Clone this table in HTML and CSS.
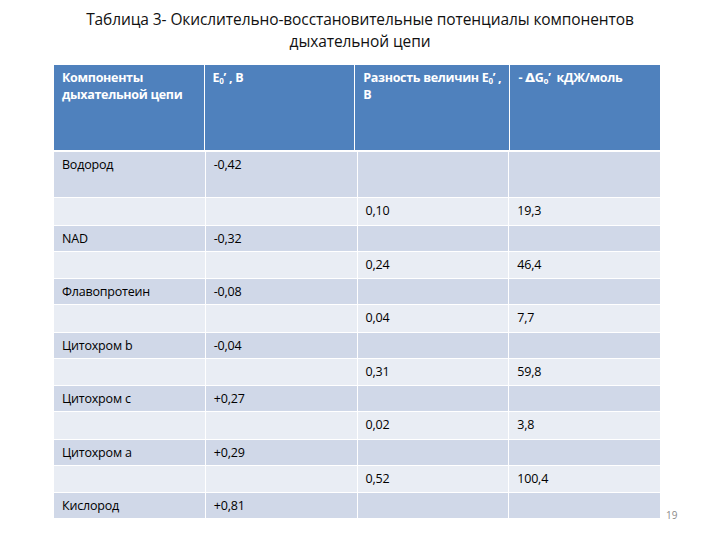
FILE: index.html
```html
<!DOCTYPE html>
<html lang="ru">
<head>
<meta charset="utf-8">
<title>Таблица 3</title>
<link rel="stylesheet" href="styles.css">
</head>
<body>
<div class="slide">
  <h1 class="title">Таблица 3- Окислительно-восстановительные потенциалы компонентов<br>дыхательной цепи</h1>
  <div class="content">
    <div class="table">
      <div class="row head">
        <div class="cell">Компоненты<br>дыхательной цепи</div>
        <div class="cell">E<sub>0</sub>’ , B</div>
        <div class="cell">Разность величин E<sub>0</sub>’ ,<br>B</div>
        <div class="cell">- <span class="delta">Δ</span>G<sub>o</sub>’ &nbsp;кДЖ/моль</div>
      </div>
      <div class="row dark tall">
        <div class="cell">Водород</div><div class="cell">-0,42</div><div class="cell"></div><div class="cell"></div>
      </div>
      <div class="row light">
        <div class="cell"></div><div class="cell"></div><div class="cell">0,10</div><div class="cell">19,3</div>
      </div>
      <div class="row dark">
        <div class="cell">NAD</div><div class="cell">-0,32</div><div class="cell"></div><div class="cell"></div>
      </div>
      <div class="row light">
        <div class="cell"></div><div class="cell"></div><div class="cell">0,24</div><div class="cell">46,4</div>
      </div>
      <div class="row dark">
        <div class="cell">Флавопротеин</div><div class="cell">-0,08</div><div class="cell"></div><div class="cell"></div>
      </div>
      <div class="row light">
        <div class="cell"></div><div class="cell"></div><div class="cell">0,04</div><div class="cell">7,7</div>
      </div>
      <div class="row dark">
        <div class="cell">Цитохром b</div><div class="cell">-0,04</div><div class="cell"></div><div class="cell"></div>
      </div>
      <div class="row light">
        <div class="cell"></div><div class="cell"></div><div class="cell">0,31</div><div class="cell">59,8</div>
      </div>
      <div class="row dark">
        <div class="cell">Цитохром с</div><div class="cell">+0,27</div><div class="cell"></div><div class="cell"></div>
      </div>
      <div class="row light">
        <div class="cell"></div><div class="cell"></div><div class="cell">0,02</div><div class="cell">3,8</div>
      </div>
      <div class="row dark">
        <div class="cell">Цитохром а</div><div class="cell">+0,29</div><div class="cell"></div><div class="cell"></div>
      </div>
      <div class="row light">
        <div class="cell"></div><div class="cell"></div><div class="cell">0,52</div><div class="cell">100,4</div>
      </div>
      <div class="row dark">
        <div class="cell">Кислород</div><div class="cell">+0,81</div><div class="cell"></div><div class="cell"></div>
      </div>
    </div>
    <div class="pagenum">19</div>
  </div>
</div>
</body>
</html>
```
FILE: styles.css
```css
html, body {
  margin: 0;
  padding: 0;
  background: #ffffff;
}
.slide {
  width: 720px;
  height: 540px;
  overflow: hidden;
  font-family: "Open Sans", "Noto Sans", "Liberation Sans", sans-serif;
  color: #000;
}
.title {
  margin: 0;
  padding-top: 8px;
  font-weight: 400;
  font-size: 15.5px;
  line-height: 22px;
  text-align: center;
  color: #111;
  letter-spacing: -0.1px;
}
.content {
  display: flex;
  align-items: flex-end;
  gap: 6px;
  margin-top: 13px;
  padding-left: 54px;
}
.table {
  width: 606px;
  display: flex;
  flex-direction: column;
  gap: 1px;
  background: #ffffff;
}
.row {
  display: grid;
  grid-template-columns: repeat(4, 1fr);
  column-gap: 1px;
  height: 25px;
}
.row.light { height: 26.5px; }
.row.tall { height: 45px; }
.row.head {
  height: 85px;
  margin-bottom: 1px;
}
.cell {
  padding: 4px 8px 0 8px;
  font-size: 12.5px;
  line-height: 17px;
  letter-spacing: -0.2px;
  white-space: nowrap;
}
.head .cell {
  background: #4f81bd;
  color: #ffffff;
  font-weight: 700;
  padding-top: 4px;
  letter-spacing: -0.3px;
}
.dark .cell { background: #d0d8e8; }
.light .cell { background: #e9edf4; }
sub {
  font-size: 8px;
  line-height: 0;
  vertical-align: -2px;
}
.delta {
  font-family: "DejaVu Sans", sans-serif;
  font-size: 13px;
  font-weight: 700;
}
.pagenum {
  font-size: 10px;
  line-height: 12px;
  color: #8b8b8b;
  margin-bottom: -3px;
}
```
